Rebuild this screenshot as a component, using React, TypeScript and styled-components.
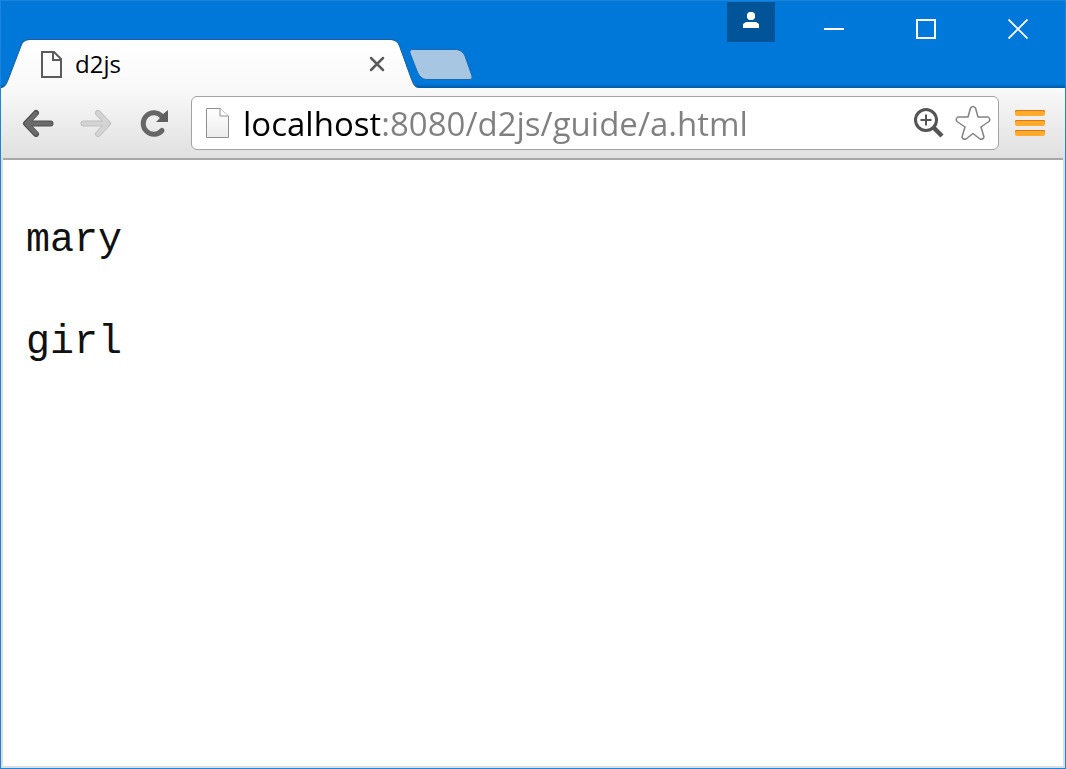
import React, { useState } from "react";
import styled, { createGlobalStyle } from "styled-components";

const GlobalStyle = createGlobalStyle`
  * { box-sizing: border-box; }
  body { margin: 0; background: #fff; }
`;

const uiFont = `"Open Sans", "Noto Sans", sans-serif`;

const Window = styled.div`
  min-height: 100vh;
  display: flex;
  flex-direction: column;
  border: 1px solid #1c84da;
  background: #0078d9;
  font-family: ${uiFont};
`;

const TitleBar = styled.header`
  display: flex;
  justify-content: space-between;
  height: 87px;
  background: linear-gradient(#0078d9 83px, #0058a4 87px);
`;

const TabStrip = styled.div`
  display: flex;
  align-items: flex-end;
`;

const Tab = styled.div`
  display: flex;
  height: 48px;
`;

const TabCap = styled.svg`
  display: block;
  width: 28px;
  height: 48px;
`;

const TabBody = styled.div`
  display: flex;
  align-items: center;
  width: 362px;
  padding: 0 3px 0 11px;
  background: linear-gradient(#fff, #f9f9f9);
  box-shadow: 0 -1px 0 #1c5f9c;
`;

const TabTitle = styled.span`
  flex: 1;
  padding-left: 12px;
  font-size: 24px;
  line-height: 46px;
  color: #000;
`;

const PlainButton = styled.button`
  display: flex;
  align-items: center;
  justify-content: center;
  padding: 0;
  border: 0;
  background: transparent;
`;

const TabClose = styled(PlainButton)`
  width: 22px;
  height: 22px;
`;

const NewTab = styled(PlainButton)`
  width: 64px;
  height: 34px;
  margin: 0 0 6px -10px;
`;

const WindowControls = styled.div`
  display: flex;
  align-items: flex-start;
  padding-right: 1px;
`;

const ProfileButton = styled(PlainButton)`
  width: 48px;
  height: 40px;
  margin: 1px 13px 0 0;
  padding-bottom: 4px;
  background: #005497;
`;

const CaptionButton = styled(PlainButton)`
  width: 92px;
  height: 56px;
`;

const Toolbar = styled.nav`
  display: flex;
  align-items: flex-start;
  height: 70px;
  padding: 8px 4px 0 8px;
  background: linear-gradient(#f9f9f9, #e0e0e0);
`;

const ToolButton = styled(PlainButton)<{ $width: number }>`
  width: ${(p) => p.$width}px;
  height: 54px;
`;

const Omnibox = styled.div`
  display: flex;
  flex: 1;
  align-items: center;
  min-width: 0;
  height: 54px;
  margin-left: 8px;
  padding: 0 3px 0 13px;
  border: 1px solid #a3a3a3;
  border-radius: 6px;
  background: #fff;
`;

const Address = styled.input`
  flex: 1;
  min-width: 0;
  height: 52px;
  margin-left: 12px;
  padding: 0;
  border: 0;
  outline: 0;
  font-family: ${uiFont};
  font-size: 33px;
  color: #808080;
  background: linear-gradient(to right, #000 137px, #808080 137px);
  background-clip: text;
  -webkit-background-clip: text;
  -webkit-text-fill-color: transparent;
`;

const BoxButton = styled(PlainButton)`
  width: 44px;
  height: 44px;
`;

const Page = styled.main`
  flex: 1;
  border: 2px solid #dedede;
  border-top: 0;
  background: #fff;
  font-family: "Liberation Mono", monospace;
`;

const PageEdge = styled.div`
  height: 2px;
  background: #a8a8a8;
`;

const PageText = styled.div`
  padding: 6px 23px 0;
`;

const Paragraph = styled.p`
  margin: 48px 0 0;
  font-size: 40px;
  line-height: 54px;
  color: #111;
`;

export default function App() {
  const [url, setUrl] = useState("localhost:8080/d2js/guide/a.html");
  return (
    <Window>
      <GlobalStyle />
      <TitleBar>
        <TabStrip>
          <Tab>
            <TabCap viewBox="0 0 28 48" overflow="visible" aria-hidden="true">
              <defs>
                <linearGradient id="tabFill" x1="0" y1="0" x2="0" y2="1">
                  <stop offset="0" stopColor="#fff" />
                  <stop offset="1" stopColor="#f9f9f9" />
                </linearGradient>
              </defs>
              <path d="M0 48C4 47 5 45 7 40L20 6Q22 0 28 0V48Z" fill="url(#tabFill)" />
              <path d="M0 47.500C4 47 5 45 7 40L20 6Q22 -.5 28 -.5" fill="none" stroke="#1c5f9c" />
            </TabCap>
            <TabBody>
              <svg width="23" height="29" viewBox="0 0 23 29" fill="none" stroke="#5b5b5b" strokeWidth="2" aria-hidden="true">
                <path d="M2 2H14L21 9V27H2ZM13 2V10H21" />
              </svg>
              <TabTitle>d2js</TabTitle>
              <TabClose aria-label="Close tab">
                <svg width="16" height="16" viewBox="0 0 16 16" stroke="#5b5b5b" strokeWidth="2.500" strokeLinecap="round">
                  <path d="M2 2L14 14M14 2L2 14" />
                </svg>
              </TabClose>
            </TabBody>
            <TabCap viewBox="0 0 28 48" overflow="visible" aria-hidden="true">
              <path d="M0 0Q6 0 8.500 6L20 38C23 46 24 47 28 48H0Z" fill="url(#tabFill)" />
              <path d="M0 -.5Q6 -.5 8.500 6L20 38C23 46 24 47 28 47.500" fill="none" stroke="#1c5f9c" />
            </TabCap>
          </Tab>
          <NewTab aria-label="New tab">
            <svg width="64" height="34" viewBox="0 0 64 34">
              <path d="M4 1.500H46C51 1.500 54 4 56 8L63 28Q64 31.500 61 31.500H18C13 31.500 10 28 8 23L1 5Q0 1.500 4 1.500Z" fill="#a6c6e1" stroke="#1a69af" />
            </svg>
          </NewTab>
        </TabStrip>
        <WindowControls>
          <ProfileButton aria-label="Profile">
            <svg width="16" height="16" viewBox="0 0 16 16" fill="#fff">
              <path d="M6 0H10L12 2V6L10 8H6L4 6V2ZM3 10H13L16 12V16H0V12Z" />
            </svg>
          </ProfileButton>
          <CaptionButton aria-label="Minimize">
            <svg width="20" height="20" viewBox="0 0 20 20">
              <path d="M0 10H20" stroke="#fff" strokeWidth="2" />
            </svg>
          </CaptionButton>
          <CaptionButton aria-label="Maximize">
            <svg width="20" height="20" viewBox="0 0 20 20">
              <path d="M1 1H19V19H1Z" fill="none" stroke="#fff" strokeWidth="2" />
            </svg>
          </CaptionButton>
          <CaptionButton aria-label="Close">
            <svg width="20" height="20" viewBox="0 0 20 20">
              <path d="M.5 .5L19.500 19.500M19.500 .5L.5 19.500" stroke="#fff" strokeWidth="1.800" />
            </svg>
          </CaptionButton>
        </WindowControls>
      </TitleBar>
      <Toolbar>
        <ToolButton $width={58} aria-label="Back">
          <svg width="32" height="28" viewBox="0 0 32 28" fill="none" strokeLinecap="round" strokeLinejoin="round">
            <path d="M14 4L4 14.500L14 25M5 14.500H28.500" stroke="#505050" strokeWidth="6" />
            <path d="M14 4.500L4.500 14.500L14 24.500M5 14.500H28.500" stroke="#6b6b6b" strokeWidth="4" />
          </svg>
        </ToolButton>
        <ToolButton $width={58} aria-label="Forward" disabled>
          <svg width="32" height="28" viewBox="0 0 32 28" fill="none" strokeLinecap="round" strokeLinejoin="round">
            <path d="M18 4L28 14.500L18 25M27 14.500H3.500" stroke="#bfbfbf" strokeWidth="6" />
            <path d="M18 4L28 14.500L18 25M27 14.500H3.500" stroke="#d4d4d4" strokeWidth="4" />
          </svg>
        </ToolButton>
        <ToolButton $width={58} aria-label="Reload">
          <svg width="28" height="28" viewBox="0 0 28 28" fill="none">
            <path d="M22 7.500A10.700 10.700 0 1 0 22 21.500" stroke="#666" strokeWidth="5" strokeLinecap="round" />
            <path d="M28 1V13H16L20 9L22.500 5.500Z" fill="#5e5e5e" />
          </svg>
        </ToolButton>
        <Omnibox>
          <svg width="26" height="34" viewBox="0 0 26 34" aria-hidden="true">
            <defs>
              <linearGradient id="paper" x1="0" y1="0" x2="0" y2="1">
                <stop offset="0" stopColor="#fff" />
                <stop offset="1" stopColor="#ececec" />
              </linearGradient>
            </defs>
            <path d="M1.500 2.500H15L23.500 10V31.500H1.500Z" fill="url(#paper)" stroke="#909090" />
            <path d="M15 2.500V10H23.500" fill="#fff" stroke="#909090" />
          </svg>
          <Address aria-label="Address" spellCheck={false} value={url} onChange={(e) => setUrl(e.target.value)} />
          <BoxButton aria-label="Zoom">
            <svg width="32" height="32" viewBox="0 0 32 32" fill="none" stroke="#545454">
              <circle cx="13" cy="13" r="10.500" strokeWidth="3" />
              <path d="M13 7.500V18.500M7.500 13H18.500" strokeWidth="2" />
              <path d="M20.500 20.500L29 29" strokeWidth="4.500" />
            </svg>
          </BoxButton>
          <BoxButton aria-label="Bookmark">
            <svg width="36" height="36" viewBox="0 0 36 36" fill="#fff" stroke="#828282" strokeWidth="1.500" strokeLinejoin="round">
              <path d="M15.500 3Q18 0 20.500 3L23 12H33Q36 14 34 16.500L26 22L29 32Q28 35 25 34L18 28.500L11 34Q8 35 7 32L10 22L2 16.500Q0 14 3 12H13Z" />
            </svg>
          </BoxButton>
        </Omnibox>
        <ToolButton $width={62} aria-label="Menu">
          <svg width="30" height="28" viewBox="0 0 30 28">
            {[1, 11, 21].map((y) => (
              <g key={y}>
                <rect x="0" y={y} width="30" height="6" rx="2" fill="#ffab2e" />
                <path d={`M0 ${y + 2}V${y + 1}Q0 ${y} 2 ${y}H28Q30 ${y} 30 ${y + 1}V${y + 2}L28 ${y + 1}H2Z`} fill="#e8720c" />
              </g>
            ))}
          </svg>
        </ToolButton>
      </Toolbar>
      <Page>
        <PageEdge />
        <PageText>
          <Paragraph>mary</Paragraph>
          <Paragraph>girl</Paragraph>
        </PageText>
      </Page>
    </Window>
  );
}
